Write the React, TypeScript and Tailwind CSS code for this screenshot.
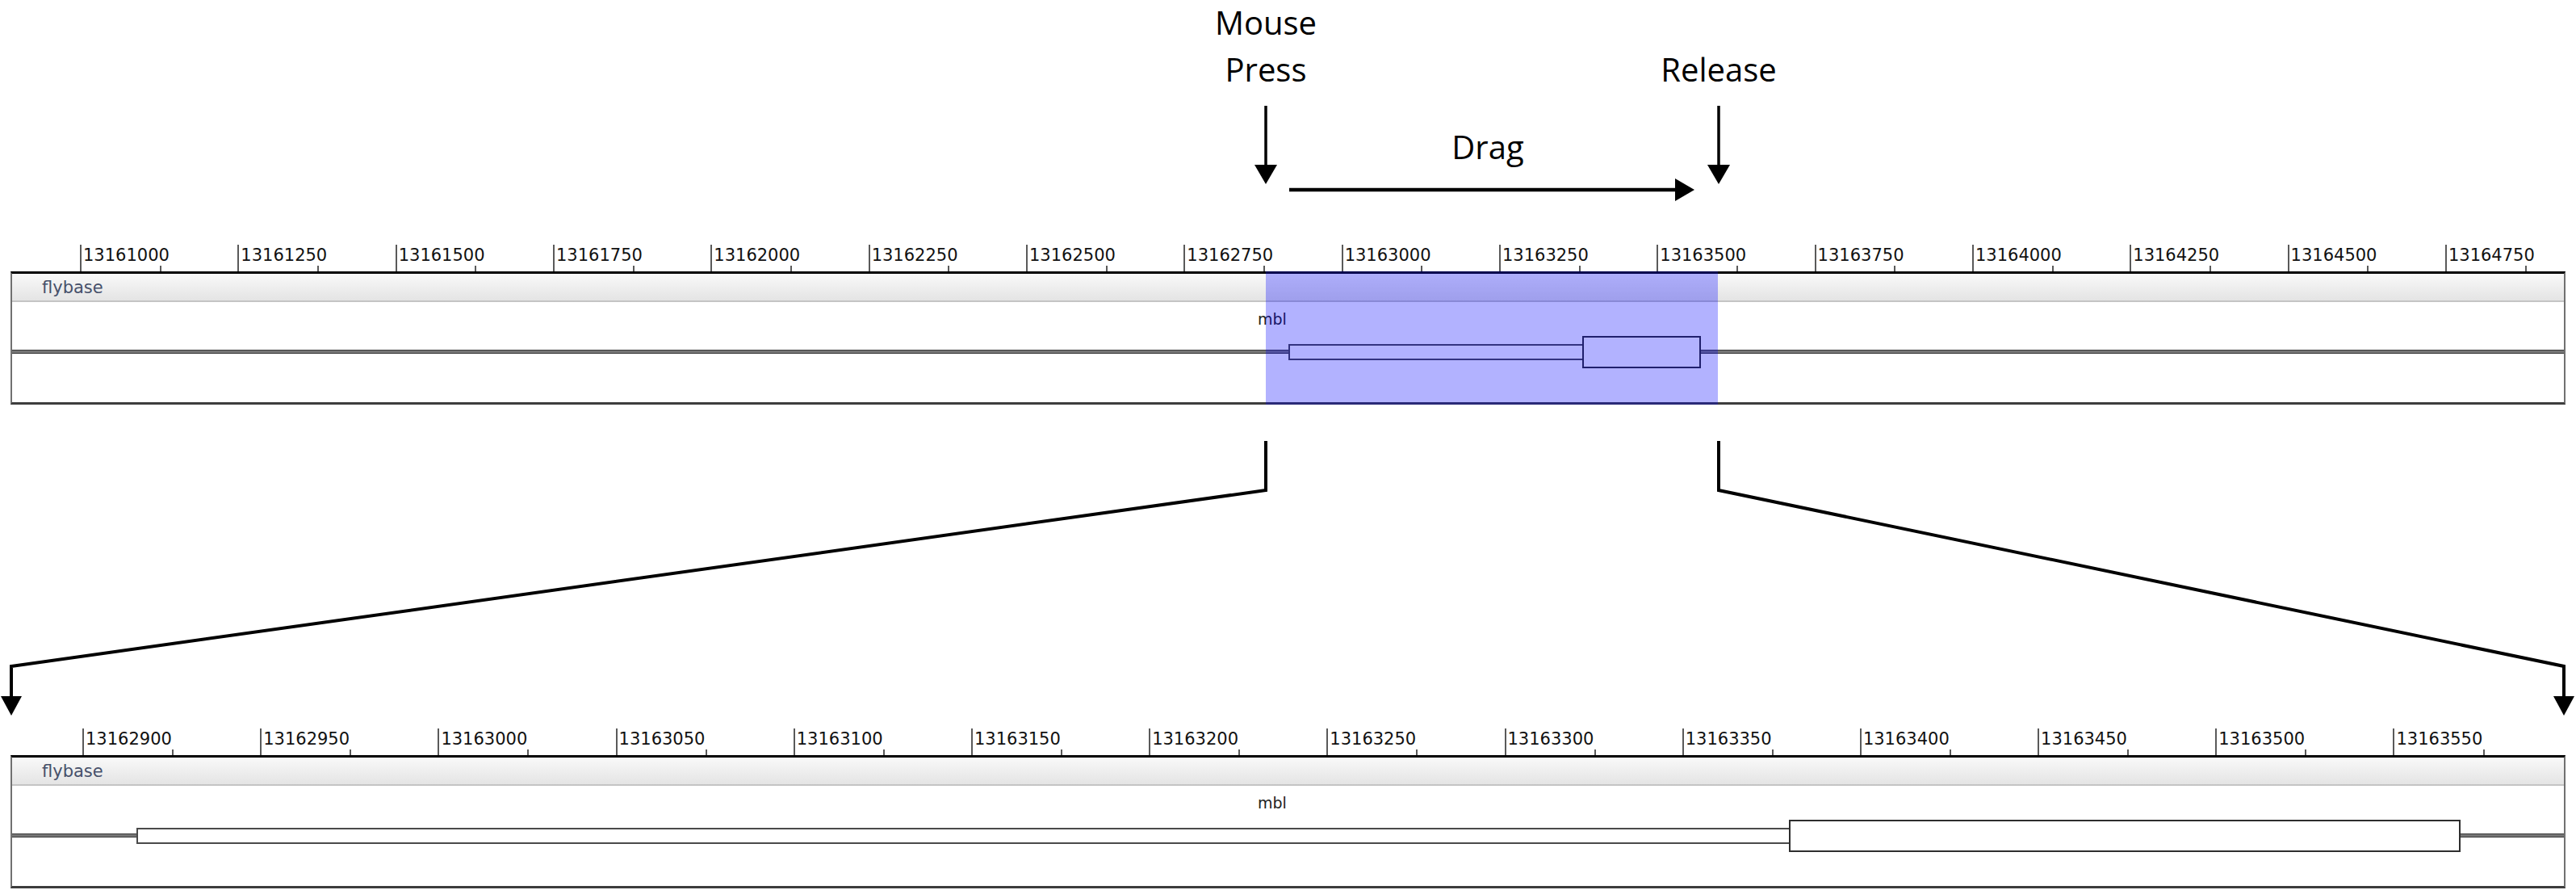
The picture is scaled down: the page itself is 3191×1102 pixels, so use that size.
import React from "react";

const topTicks = Array.from({ length: 16 }, (_, i) => 13161000 + 250 * i);
const bottomTicks = Array.from({ length: 14 }, (_, i) => 13162900 + 50 * i);

type RulerProps = {
  offsetClass: string;
  cellClass: string;
  labels: number[];
};

function Ruler({ offsetClass, cellClass, labels }: RulerProps) {
  return (
    <div className="flex h-[46px] shrink-0 items-end overflow-hidden">
      <div className={`shrink-0 ${offsetClass}`} />
      {labels.map((l) => (
        <div
          key={l}
          className={`relative h-[33px] shrink-0 border-l-2 border-[#5a5a5a] ${cellClass}`}
        >
          <span className="block pl-[2px] pt-[3px] font-['DejaVu_Sans',sans-serif] text-[21px] leading-none text-[#111]">
            {l}
          </span>
          <span className="absolute bottom-0 left-1/2 h-[7px] w-[2px] bg-[#5a5a5a]" />
        </div>
      ))}
    </div>
  );
}

type TrackProps = {
  utrClass: string;
  cdsClass: string;
  selection?: boolean;
};

function Track({ utrClass, cdsClass, selection }: TrackProps) {
  return (
    <div className="relative ml-[13px] flex h-[165px] w-[3165px] shrink-0 flex-col border-x-2 border-t-[3px] border-b-[3px] border-x-[#707070] border-t-black border-b-[#3d3d3d]">
      <div className="h-[35px] shrink-0 border-b-2 border-[#c4c4c4] bg-linear-to-b from-[#f9f9f9] to-[#e4e4e4] pl-[37px] pt-[5px]">
        <span className="font-['DejaVu_Sans',sans-serif] text-[21px] leading-[24px] text-[#46506a]">
          flybase
        </span>
      </div>
      <div className="relative h-[124px] shrink-0">
        <span className="absolute left-[1543px] top-[12px] font-['DejaVu_Sans',sans-serif] text-[19px] leading-none text-[#222]">
          mbl
        </span>
        {/* backbone */}
        <div className="absolute inset-x-0 top-[59px] h-[5px] border-y border-[#3a3a3a] bg-[#767676]" />
        {/* UTR */}
        <div
          className={`absolute top-[52px] h-[20px] border-2 border-[#4a4a4a] bg-white ${utrClass}`}
        />
        {/* CDS */}
        <div
          className={`absolute top-[42px] h-[40px] border-2 border-[#2e2e2e] bg-white ${cdsClass}`}
        />
      </div>
      {selection && (
        <div className="absolute -top-[3px] -bottom-[3px] left-[1553px] w-[560px] bg-[rgba(0,0,255,0.3)]" />
      )}
    </div>
  );
}

function Annotations() {
  const label =
    "absolute w-[300px] text-center font-['Open_Sans',sans-serif] text-[40px] leading-[40px] text-black";
  return (
    <div className="relative h-[290px] shrink-0">
      <span className={`${label} left-[1418px] top-[8px]`}>Mouse</span>
      <span className={`${label} left-[1418px] top-[66px]`}>Press</span>
      <span className={`${label} left-[1979px] top-[66px]`}>Release</span>
      <span className={`${label} left-[1693px] top-[162px]`}>Drag</span>
      <svg className="absolute inset-0" width="3191" height="290">
        <line x1="1568" y1="131" x2="1568" y2="206" stroke="black" strokeWidth="3.5" />
        <polygon points="1554,204 1582,204 1568,228" fill="black" />
        <line x1="2129" y1="131" x2="2129" y2="206" stroke="black" strokeWidth="3.5" />
        <polygon points="2115,204 2143,204 2129,228" fill="black" />
        <line x1="1597" y1="235" x2="2077" y2="235" stroke="black" strokeWidth="4.5" />
        <polygon points="2075,221 2075,249 2099,235" fill="black" />
      </svg>
    </div>
  );
}

function Connectors() {
  return (
    <div className="relative h-[388px] shrink-0">
      <svg className="absolute inset-0" width="3191" height="388">
        <polyline
          points="1568,45 1568,106 14,324 14,362"
          fill="none"
          stroke="black"
          strokeWidth="4"
        />
        <polygon points="1,361 27,361 14,385" fill="black" />
        <polyline
          points="2129,45 2129,106 3176,324 3176,362"
          fill="none"
          stroke="black"
          strokeWidth="4"
        />
        <polygon points="3163,361 3189,361 3176,385" fill="black" />
      </svg>
    </div>
  );
}

export default function App() {
  return (
    <div className="flex h-[1102px] w-[3191px] flex-col overflow-hidden bg-white">
      <Annotations />
      <Ruler offsetClass="w-[99px]" cellClass="w-[195.33px]" labels={topTicks} />
      <Track utrClass="left-[1581px] w-[366px]" cdsClass="left-[1945px] w-[147px]" selection />
      <Connectors />
      <Ruler offsetClass="w-[102px]" cellClass="w-[220.2px]" labels={bottomTicks} />
      <Track utrClass="left-[154px] w-[2049px]" cdsClass="left-[2201px] w-[832px]" />
    </div>
  );
}
